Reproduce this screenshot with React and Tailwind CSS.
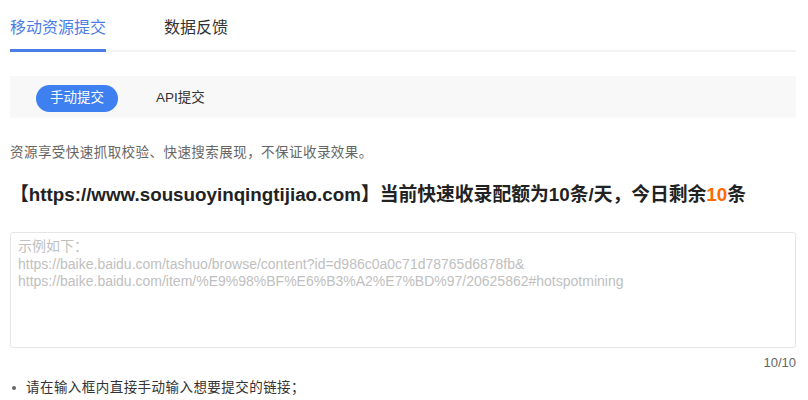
import React, { useState } from 'react';

const font = { fontFamily: '"Liberation Sans", Arial, "Noto Sans CJK SC", sans-serif' };

const App = () => {
  const [tab, setTab] = useState('mobile');
  const [mode, setMode] = useState('manual');

  return (
    <div className="w-[808px] h-[400px] bg-white overflow-hidden pl-[10px] pr-[12px]" style={font}>
      {/* Top tabs */}
      <div className="flex items-end h-[52px] border-b-2 border-[#f3f3f3]">
        <button
          onClick={() => setTab('mobile')}
          className={`h-[50px] -mb-[2px] pt-[5px] text-[16px] border-b-[3px] ${tab === 'mobile' ? 'text-[#4a7de6] border-[#4a7de6]' : 'text-[#333] border-transparent'}`}
        >
          移动资源提交
        </button>
        <button
          onClick={() => setTab('feedback')}
          className={`ml-[58px] h-[50px] -mb-[2px] pt-[5px] text-[16px] border-b-[3px] ${tab === 'feedback' ? 'text-[#4a7de6] border-[#4a7de6]' : 'text-[#333] border-transparent'}`}
        >
          数据反馈
        </button>
      </div>

      {/* Submit mode switch */}
      <div className="mt-[24px] h-[42px] bg-[#f8f8f8] flex items-center pl-[26px]">
        <button
          onClick={() => setMode('manual')}
          className={`h-[27px] w-[82px] mt-[2px] rounded-full text-[13.5px] ${mode === 'manual' ? 'bg-[#3e80f0] text-white' : 'text-[#333]'}`}
        >
          手动提交
        </button>
        <button
          onClick={() => setMode('api')}
          className={`ml-[20px] h-[27px] mt-[2px] px-[18px] rounded-full text-[13.5px] ${mode === 'api' ? 'bg-[#3e80f0] text-white' : 'text-[#333]'}`}
        >
          API提交
        </button>
      </div>

      <p className="mt-[25px] text-[13.5px] tracking-[0.45px] text-[#666] leading-[20px]">
        资源享受快速抓取校验、快速搜索展现，不保证收录效果。
      </p>

      <h2 className="mt-[20px] text-[18.8px] font-bold text-[#222] leading-[24px]">
        【https://www.sousuoyinqingtijiao.com】当前快速收录配额为10条/天，今日剩余
        <span className="text-[#ff6a00]">10</span>条
      </h2>

      {/* URL input */}
      <textarea
        className="mt-[25px] block w-full h-[116px] border border-[#e6e6e6] rounded-[3px] px-[7px] py-[5px] text-[14px] leading-[17.5px] text-[#333] placeholder:text-[#c0c0c0] resize-none outline-none"
        placeholder={'示例如下：\nhttps://baike.baidu.com/tashuo/browse/content?id=d986c0a0c71d78765d6878fb&\nhttps://baike.baidu.com/item/%E9%98%BF%E6%B3%A2%E7%BD%97/20625862#hotspotmining'}
      />
      <div className="mt-[6px] text-right text-[13px] text-[#666] leading-[18px]">10/10</div>

      <ul className="mt-[6px] text-[13.5px] tracking-[0.45px] text-[#333] leading-[20px]">
        <li className="flex items-center">
          <span className="w-[4px] h-[4px] rounded-full bg-[#666] ml-[2px] mr-[10px]" />
          请在输入框内直接手动输入想要提交的链接；
        </li>
      </ul>
    </div>
  );
};

export default App;
